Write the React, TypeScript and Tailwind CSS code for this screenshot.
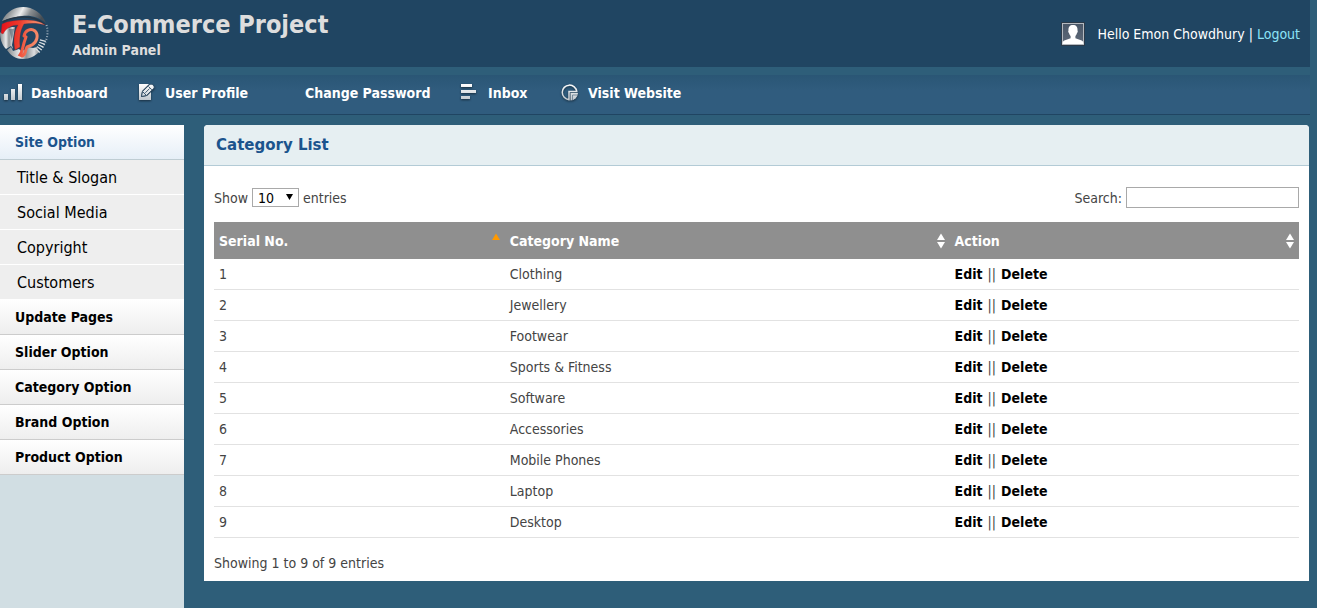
import { useState } from "react";

const categories = [
  "Clothing",
  "Jewellery",
  "Footwear",
  "Sports & Fitness",
  "Software",
  "Accessories",
  "Mobile Phones",
  "Laptop",
  "Desktop",
];

const siteLinks = ["Title & Slogan", "Social Media", "Copyright", "Customers"];

const sections = [
  "Update Pages",
  "Slider Option",
  "Category Option",
  "Brand Option",
  "Product Option",
];

function Logo() {
  return (
    <svg className="h-[54px] w-[50px] shrink-0" viewBox="0 0 50 54" aria-hidden="true">
      <defs>
        <linearGradient id="chrome" x1="0" y1="0" x2="1" y2="0.2">
          <stop offset="0" stopColor="#5d6265" />
          <stop offset="0.25" stopColor="#9a9ea0" />
          <stop offset="0.48" stopColor="#ededed" />
          <stop offset="0.68" stopColor="#8b8f92" />
          <stop offset="1" stopColor="#454d54" />
        </linearGradient>
        <linearGradient id="chromeLow" x1="0" y1="0" x2="1" y2="0">
          <stop offset="0" stopColor="#84898c" />
          <stop offset="0.4" stopColor="#e9eaeb" />
          <stop offset="0.6" stopColor="#8f9497" />
          <stop offset="0.85" stopColor="#dcdddf" />
          <stop offset="1" stopColor="#8a8f92" />
        </linearGradient>
        <linearGradient id="flame" gradientUnits="userSpaceOnUse" x1="0" y1="20" x2="46" y2="26">
          <stop offset="0" stopColor="#e5101a" />
          <stop offset="0.4" stopColor="#ec3a2c" />
          <stop offset="0.7" stopColor="#f57d5c" />
          <stop offset="1" stopColor="#f59a7c" />
        </linearGradient>
      </defs>
      <path d="M2 14C7 4 15 0 23 0c10 0 19 6 23 16C38 10 31 8 22 9 14 10 8 12 2 14Z" fill="url(#chrome)" />
      <path d="M3 15c7-4 14-5 21-5 9 0 16 3 21 8" fill="none" stroke="#273644" strokeWidth="1.500" />
      <path d="M0 26c4-4 8-6 14-6h1l-3 18 1 4-2-3-5 3C2 38 0 32 0 26Z" fill="url(#chromeLow)" />
      <path d="M9 22h5l-2 12Z" fill="#52626f" opacity="0.6" />
      <path d="M7 43l4-3 2 4 6-2 2 2 6-2 1-2 5 1 4-1 2 5c-4 4-9 7-16 7-7 0-12-3-16-9Z" fill="url(#chromeLow)" />
      <path d="M46.500 18a25 25 0 0 1-4 22" fill="none" stroke="#9aabb9" strokeWidth="2" strokeDasharray="1 1.800" />
      <path d="M43 33a22 22 0 0 1-6 11" fill="none" stroke="#dde1e4" strokeWidth="6" strokeDasharray="1.300 1.500" />
      <path d="M2 17c6-3 14-4 22-4 9 0 16 1 21 5-7-2-14-2-21-1-3 5-5 12-4 23l-5 3c-2-9-1-18 3-25-6 0-12 3-15 9l-2-1Z" fill="url(#flame)" stroke="#84202a" strokeWidth="0.300" />
      <path d="M24 29c1-6 7-8 11-5 4 4 2 11-3 14l-5 2c-2 3-1 8-5 9l-2-1c3-4 2-8 6-18" fill="none" stroke="url(#flame)" strokeWidth="3" strokeLinecap="round" />
    </svg>
  );
}

function Avatar() {
  return (
    <svg className="h-6 w-6 shrink-0" viewBox="0 0 24 24" aria-hidden="true">
      <defs>
        <linearGradient id="portrait" x1="0" y1="0" x2="0" y2="1">
          <stop offset="0" stopColor="#485667" />
          <stop offset="1" stopColor="#606b7a" />
        </linearGradient>
      </defs>
      <rect x="0.5" y="0.5" width="23" height="23" fill="url(#portrait)" stroke="#2b3a49" />
      <rect x="1.500" y="1.500" width="21" height="21" fill="none" stroke="#b5bac0" />
      <path d="M12 3c3.200 0 4.800 2 4.500 5.500.5.600.3 2-.5 2.500-.3 1.500-1 2.400-1.600 3v2.200l6.300 2.200c1.200.5 1.800 1.600 1.800 3.600h-21c0-2 .6-3.100 1.800-3.600l6.300-2.200V14c-.6-.6-1.300-1.500-1.600-3-.8-.5-1-1.900-.5-2.500C7.200 5 8.800 3 12 3Z" fill="#fff" />
    </svg>
  );
}

function IconFill({ id }: { id: string }) {
  return (
    <defs>
      <linearGradient id={id} gradientUnits="userSpaceOnUse" x1="0" y1="0" x2="0" y2="18">
        <stop offset="0" stopColor="#ffffff" />
        <stop offset="1" stopColor="#b9c1c8" />
      </linearGradient>
    </defs>
  );
}

const iconClass = "h-[18px] w-[18px] shrink-0 drop-shadow-[0_1px_1px_rgba(0,0,0,0.5)]";

function BarsIcon() {
  return (
    <svg className={iconClass} viewBox="0 0 18 18" aria-hidden="true">
      <IconFill id="bars" />
      <path d="M0 10h4v6H0zM7 5h4v11H7zM14 0h4v16h-4z" fill="url(#bars)" />
    </svg>
  );
}

function EditIcon() {
  return (
    <svg className={iconClass} viewBox="0 0 18 18" aria-hidden="true">
      <IconFill id="edit" />
      <path d="M1 0h10L4 7 3 13l6-1 4-4v8H1Z" fill="url(#edit)" />
      <path d="m3.500 12.500 1-5L11.500.7c1-.8 2.500-.7 3.700.4 1.200 1.200 1.300 2.500.4 3.500L8.500 11.500Z" fill="url(#edit)" stroke="#2b4a63" strokeWidth="0.900" />
      <path d="m5 8 3 3M10.500 2.500l3.400 3.300M7.300 8.800l4.300-4.300" fill="none" stroke="#2b4a63" strokeWidth="0.900" />
    </svg>
  );
}

function LinesIcon() {
  return (
    <svg className={iconClass} viewBox="0 0 18 18" aria-hidden="true">
      <IconFill id="lines" />
      <path d="M0 0h11v3H0zM0 6h15v3H0zM0 12h9v3H0z" fill="url(#lines)" />
    </svg>
  );
}

function ChartIcon() {
  return (
    <svg className={iconClass} viewBox="0 0 18 18" aria-hidden="true">
      <IconFill id="chart" />
      <path d="M8 15.700A7.300 7.300 0 1 1 15.800 7.500H8Z" fill="none" stroke="url(#chart)" strokeWidth="1.500" />
      <path d="M9.500 9H17a8 8 0 0 1-7.500 7.500Z" fill="url(#chart)" />
      <path d="M11.500 16v-5H17" fill="none" stroke="#536d82" strokeWidth="0.700" />
    </svg>
  );
}

function SortMark({ sorted }: { sorted?: boolean }) {
  return (
    <svg className="h-4 w-2 shrink-0" viewBox="0 0 8 16" aria-hidden="true">
      <path d="M4 0.500 8 7H0Z" fill={sorted ? "#ff9900" : "#fff"} />
      {!sorted && <path d="M0 9h8l-4 6.500Z" fill="#fff" />}
    </svg>
  );
}

const navItems = [
  { label: "Dashboard", icon: <BarsIcon />, width: "w-[134px]" },
  { label: "User Profile", icon: <EditIcon />, width: "w-[140px]" },
  { label: "Change Password", icon: <span className="w-[18px]" />, width: "w-[183px]" },
  { label: "Inbox", icon: <LinesIcon />, width: "w-[100px]" },
  { label: "Visit Website", icon: <ChartIcon />, width: "w-[140px]" },
];

export default function App() {
  const [query, setQuery] = useState("");
  const rows = categories
    .map((name, i) => ({ name, serial: i + 1 }))
    .filter((r) => r.name.toLowerCase().includes(query.toLowerCase()));

  return (
    <div className="flex min-h-screen flex-col bg-[#2e5e79] font-['DejaVu_Sans_Condensed','DejaVu_Sans',sans-serif] text-sm text-[#444]">
      <div className="mr-[7px]">
        <header className="flex h-[67px] items-center justify-between bg-[#204562] pr-2.5">
          <div className="flex items-center gap-[22px]">
            <Logo />
            <div className="text-[#ddd]">
              <h1 className="text-[25px] leading-8 font-bold">E-Commerce Project</h1>
              <p className="leading-[18px] font-bold">Admin Panel</p>
            </div>
          </div>
          <div className="flex items-center gap-3 text-white">
            <Avatar />
            <p>
              Hello Emon Chowdhury | <a href="#logout" className="text-[#8ce3f7]">Logout</a>
            </p>
          </div>
        </header>
        <nav className="mt-2 flex h-10 items-center border-b border-[#204562] bg-linear-to-b from-[#2a5675] to-[#305c7e] to-40% pb-1 pl-1">
          {navItems.map((item) => (
            <a key={item.label} href="#" className={`flex shrink-0 items-center gap-[9px] font-bold whitespace-nowrap text-white ${item.width}`}>
              {item.icon}
              {item.label}
            </a>
          ))}
        </nav>
      </div>

      <div className="mt-2.5 flex grow items-stretch">
        <aside className="w-[184px] shrink-0 bg-[#d1dee3] font-bold text-black">
          <button className="block h-[35px] w-full border-b border-[#bfcdd3] bg-linear-to-b from-white to-[#e6eff7] pl-[15px] text-left text-[#1b548d]">
            Site Option
          </button>
          <ul className="text-base font-normal">
            {siteLinks.map((label) => (
              <li key={label} className="border-b border-white">
                <a href="#" className="flex h-[34px] items-center bg-[#eee] pt-px pl-[17px]">{label}</a>
              </li>
            ))}
          </ul>
          {sections.map((label) => (
            <button key={label} className="block h-[35px] w-full border-b border-[#ccc] bg-linear-to-b from-white to-[#eee] pl-[15px] text-left">
              {label}
            </button>
          ))}
        </aside>

        <main className="mr-2 ml-5 grow self-start rounded-t bg-white">
          <h2 className="flex h-[41px] items-center rounded-t border-b border-[#b3cbd6] bg-[#e6eff2] px-3 pt-0.5 font-['DejaVu_Sans',sans-serif] text-[15px] font-bold text-[#1b548d]">
            Category List
          </h2>
          <div className="px-2.5 pt-[21px] pb-2">
            <div className="mb-3.5 flex items-center justify-between">
              <label className="flex items-center gap-1">
                Show
                <span className="relative">
                  <select className="h-[19px] w-[47px] appearance-none border border-[#a9a9a9] bg-white pl-[5px] text-sm leading-4 text-black">
                    <option>10</option>
                    <option>25</option>
                    <option>50</option>
                  </select>
                  <svg className="pointer-events-none absolute top-1.5 right-1.5 h-1.5 w-[7px]" viewBox="0 0 7 6" aria-hidden="true">
                    <path d="M0 0h7L3.500 6Z" fill="#000" />
                  </svg>
                </span>
                entries
              </label>
              <label className="flex items-center gap-1">
                Search:
                <input
                  type="text"
                  value={query}
                  onChange={(e) => setQuery(e.target.value)}
                  className="h-[21px] w-[173px] border border-[#a9a9a9] bg-white px-1"
                />
              </label>
            </div>
            <table className="w-full table-fixed border-separate border-spacing-0 text-left">
              <thead>
                <tr className="h-[37px] bg-[#8f8f8f] text-white">
                  <th className="w-[26.8%] px-[5px]">
                    <span className="flex items-center justify-between">Serial No.<SortMark sorted /></span>
                  </th>
                  <th className="w-[41%] px-[5px]">
                    <span className="flex items-center justify-between">Category Name<SortMark /></span>
                  </th>
                  <th className="w-[32.2%] px-[5px]">
                    <span className="flex items-center justify-between">Action<SortMark /></span>
                  </th>
                </tr>
              </thead>
              <tbody>
                {rows.map((row) => (
                  <tr key={row.serial} className="h-[31px]">
                    <td className="border-b border-[#e2e2e2] px-[5px]">{row.serial}</td>
                    <td className="border-b border-[#e2e2e2] px-[5px]">{row.name}</td>
                    <td className="border-b border-[#e2e2e2] px-[5px]">
                      <span className="flex gap-[5px]">
                        <a href="#edit" className="font-bold text-black">Edit</a>
                        ||
                        <a href="#delete" className="font-bold text-black">Delete</a>
                      </span>
                    </td>
                  </tr>
                ))}
              </tbody>
            </table>
            <p className="mt-[15px]">
              Showing 1 to {rows.length} of {rows.length} entries
            </p>
          </div>
        </main>
      </div>
    </div>
  );
}
